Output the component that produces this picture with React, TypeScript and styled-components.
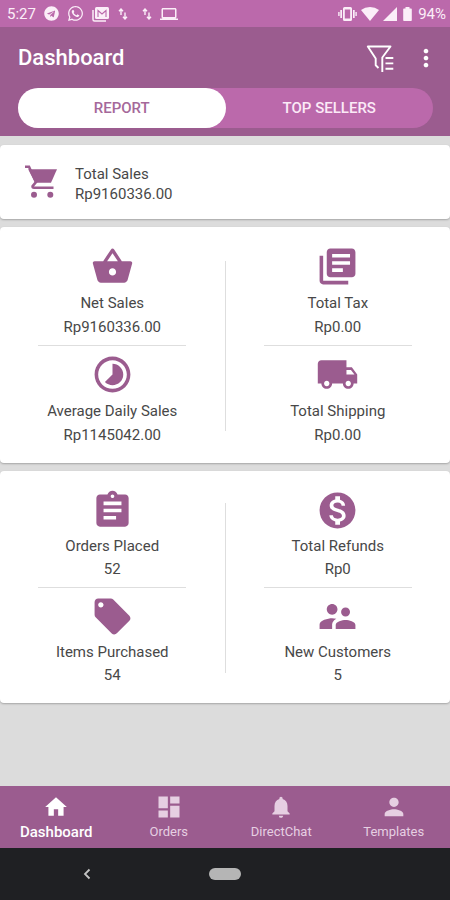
import React from "react";
import styled, { createGlobalStyle } from "styled-components";
import type { IconType } from "react-icons";
import {
  MdAssignment,
  MdDashboard,
  MdHome,
  MdLaptop,
  MdLibraryBooks,
  MdLocalOffer,
  MdLocalShipping,
  MdMonetizationOn,
  MdMoreVert,
  MdNotifications,
  MdPerson,
  MdShoppingBasket,
  MdSupervisorAccount,
  MdTimelapse,
} from "react-icons/md";
import { FaTelegram, FaWhatsapp } from "react-icons/fa";

const color = {
  primary: "#9b5c8f",
  accent: "#bb69ab",
  pale: "#e6cfe2",
  page: "#dcdcdc",
  line: "#dedede",
  text: "#484848",
};

const GlobalStyle = createGlobalStyle`
  * { box-sizing: border-box; }
  body {
    margin: 0;
    background: ${color.page};
    font-family: Roboto, "Liberation Sans", sans-serif;
    color: ${color.text};
  }
  button { font: inherit; border: 0; padding: 0; background: none; cursor: pointer; }
  svg { display: block; flex: none; }
`;

const Page = styled.div`
  min-height: 100vh;
  display: flex;
  flex-direction: column;
`;

const StatusBar = styled.div`
  display: flex;
  align-items: center;
  justify-content: space-between;
  height: 27px;
  padding: 0 4px 0 7px;
  background: ${color.accent};
  color: #fbeef8;
  font-size: 15px;
`;

const StatusGroup = styled.div<{ $gap: number }>`
  display: flex;
  align-items: center;
  gap: ${(p) => p.$gap}px;
`;

const Header = styled.header`
  background: ${color.primary};
  color: #fff;
  padding: 12px 17px 8px 18px;
`;

const TitleRow = styled.div`
  display: flex;
  align-items: center;
  height: 38px;
  margin-bottom: 11px;
`;

const Title = styled.h1`
  flex: 1;
  margin: 0;
  font-size: 22px;
  line-height: 28px;
  font-weight: 500;
`;

const IconButton = styled.button`
  display: flex;
  align-items: center;
  justify-content: center;
  color: #fff;
`;

const Actions = styled.div`
  display: flex;
  align-items: center;
  gap: 18px;
  margin-right: -7px;
`;

const Tabs = styled.div`
  display: flex;
  height: 40px;
  border-radius: 20px;
  background: ${color.accent};
`;

const Tab = styled.button<{ $active?: boolean }>`
  flex: 1;
  border-radius: 20px;
  background: ${(p) => (p.$active ? "#fff" : "transparent")};
  color: ${(p) => (p.$active ? "#a5689a" : "#fbeaf7")};
  font-size: 15px;
  font-weight: 500;
`;

const Main = styled.main`
  flex: 1;
  padding: 9px 0;
  display: flex;
  flex-direction: column;
  gap: 8px;
`;

const Card = styled.section`
  display: flex;
  align-items: center;
  background: #fff;
  border-radius: 4px;
  box-shadow: 0 1px 2px rgba(0, 0, 0, 0.25);
`;

const TotalCard = styled(Card)`
  gap: 16px;
  height: 74px;
  padding: 0 25px;
  color: ${color.primary};
`;

const TotalText = styled.div`
  display: flex;
  flex-direction: column;
  font-size: 15px;
  line-height: 20px;
  padding-top: 4px;
  color: ${color.text};
`;

const StatCard = styled(Card)<{ $line: number }>`
  padding: 18px 0 16px;
  line-height: ${(p) => p.$line}px;
`;

const Column = styled.div`
  flex: 1;
  display: flex;
  flex-direction: column;
  align-items: center;
`;

const VerticalRule = styled.div`
  width: 1px;
  height: 170px;
  background: ${color.line};
`;

const HorizontalRule = styled.hr`
  width: 66%;
  height: 1px;
  margin: 6px 0 7px;
  border: 0;
  background: ${color.line};
`;

const StatItem = styled.div`
  display: flex;
  flex-direction: column;
  align-items: center;
  font-size: 15px;
  white-space: nowrap;
`;

const IconHolder = styled.div`
  color: ${color.primary};
  margin-bottom: 3px;
`;

const BottomNav = styled.nav`
  display: grid;
  grid-template-columns: repeat(4, 1fr);
  height: 62px;
  background: ${color.primary};
`;

const NavButton = styled.button<{ $active?: boolean }>`
  display: flex;
  flex-direction: column;
  align-items: center;
  justify-content: center;
  color: ${(p) => (p.$active ? "#fff" : color.pale)};
  font-size: ${(p) => (p.$active ? 15 : 13)}px;
  font-weight: ${(p) => (p.$active ? 500 : 400)};
  line-height: 20px;
`;

const NavIcon = styled.span`
  display: flex;
  align-items: center;
  height: 30px;
`;

const SystemBar = styled.div`
  display: grid;
  grid-template-columns: repeat(3, 1fr);
  place-items: center;
  height: 52px;
  padding: 0 18px;
  background: #1f2023;
`;

const HomePill = styled.button`
  && {
    width: 32px;
    height: 12px;
    border-radius: 6px;
    background: #b5b5b5;
  }
`;

function MailStackIcon() {
  return (
    <svg width="18" height="16" viewBox="0 0 18 16" fill="none">
      <path d="M1 4v9.500q0 1.500 1.500 1.500H14" stroke="currentColor" strokeWidth="1.500" />
      <rect x="3" y="1" width="14" height="12" rx="1.500" fill="currentColor" />
      <path d="M6 11V4.500l4 3.500L14 4.500V11" stroke={color.accent} strokeWidth="1.100" />
    </svg>
  );
}

function DataArrowsIcon() {
  return (
    <svg width="10" height="12" viewBox="0 0 10 12" fill="none" stroke="currentColor" strokeWidth="1.400">
      <path d="M3 7V1M1 3.200 3 1l2 2.200M7 4.500V11M5 8.800 7 11l2-2.200" />
    </svg>
  );
}

function VibrateIcon() {
  return (
    <svg width="19" height="14" viewBox="0 0 19 14" fill="currentColor">
      <path
        fillRule="evenodd"
        d="M6.500 0h6A1.500 1.500 0 0 1 14 1.500v11a1.500 1.500 0 0 1-1.500 1.500h-6A1.500 1.500 0 0 1 5 12.500v-11A1.500 1.500 0 0 1 6.500 0zm.3 2.500v9h5.400v-9z"
      />
      <path d="M2.300 3h1.700v8H2.300zM15 3h1.700v8H15zM.2 5h1.400v4H.2zM17.400 5h1.400v4h-1.400z" />
    </svg>
  );
}

function WifiIcon() {
  return (
    <svg width="18" height="14" viewBox="0 0 18 14" fill="currentColor">
      <path d="M9 14 0 3Q4 0 9 0t9 3z" />
    </svg>
  );
}

function SignalIcon() {
  return (
    <svg width="14" height="14" viewBox="0 0 14 14" fill="currentColor">
      <path d="M14 0v14H0z" />
    </svg>
  );
}

function BatteryIcon() {
  return (
    <svg width="13" height="14" viewBox="0 0 13 14" fill="currentColor">
      <path d="M4.500 0h4v1.500H10q.8 0 .8.800v10.900q0 .8-.8.800H3q-.8 0-.8-.8V2.300q0-.8.8-.8h1.500z" />
    </svg>
  );
}

function CartIcon() {
  return (
    <svg width="34" height="34" viewBox="0 0 34 34" fill="currentColor">
      <path d="M3.200 4.200H32L26 17.800H10z" />
      <path
        d="M0 1.700H4L11 17 7.600 21.200Q7.200 22.700 9 22.700H28.500"
        fill="none"
        stroke="currentColor"
        strokeWidth="2.600"
      />
      <circle cx="9" cy="29.700" r="3" />
      <circle cx="25.300" cy="29.700" r="3" />
    </svg>
  );
}

function FilterIcon() {
  return (
    <svg width="28" height="29" viewBox="0 0 28 29" fill="none" stroke="currentColor" strokeWidth="1.900">
      <path d="M12.500 24 9.700 21.300V14.500L1.800 2.500H24.500L16.300 13.500V28" strokeLinejoin="round" />
      <path d="M19.500 14h7.800M19.500 19.400h7.800M19.500 24.800h7.800" />
    </svg>
  );
}

function BackIcon() {
  return (
    <svg width="8" height="12" viewBox="0 0 8 12" fill="none" stroke="#c4c4c4" strokeWidth="1.800">
      <path d="M6.500 1.500 2 6l4.500 4.500" />
    </svg>
  );
}

type StatData = { icon: IconType; label: string; value: string };

function Stat({ icon: Icon, label, value }: StatData) {
  return (
    <StatItem>
      <IconHolder>
        <Icon size={43} />
      </IconHolder>
      <span>{label}</span>
      <span>{value}</span>
    </StatItem>
  );
}

function StatColumn({ items }: { items: [StatData, StatData] }) {
  return (
    <Column>
      <Stat {...items[0]} />
      <HorizontalRule />
      <Stat {...items[1]} />
    </Column>
  );
}

const navItems: { icon: IconType; label: string; size: number; active?: boolean }[] = [
  { icon: MdHome, label: "Dashboard", size: 26, active: true },
  { icon: MdDashboard, label: "Orders", size: 28 },
  { icon: MdNotifications, label: "DirectChat", size: 26 },
  { icon: MdPerson, label: "Templates", size: 28 },
];

export default function App() {
  return (
    <Page>
      <GlobalStyle />
      <StatusBar>
        <StatusGroup $gap={8}>
          <span>5:27</span>
          <FaTelegram size={15} />
          <FaWhatsapp size={17} />
          <MailStackIcon />
          <StatusGroup $gap={14}>
            <DataArrowsIcon />
            <DataArrowsIcon />
          </StatusGroup>
          <MdLaptop size={18} />
        </StatusGroup>
        <StatusGroup $gap={4}>
          <VibrateIcon />
          <WifiIcon />
          <SignalIcon />
          <BatteryIcon />
          <span>94%</span>
        </StatusGroup>
      </StatusBar>

      <Header>
        <TitleRow>
          <Title>Dashboard</Title>
          <Actions>
            <IconButton aria-label="Filter">
              <FilterIcon />
            </IconButton>
            <IconButton aria-label="More options">
              <MdMoreVert size={28} />
            </IconButton>
          </Actions>
        </TitleRow>
        <Tabs role="tablist">
          <Tab role="tab" aria-selected $active>
            REPORT
          </Tab>
          <Tab role="tab" aria-selected={false}>
            TOP SELLERS
          </Tab>
        </Tabs>
      </Header>

      <Main>
        <TotalCard>
          <CartIcon />
          <TotalText>
            <span>Total Sales</span>
            <span>Rp9160336.00</span>
          </TotalText>
        </TotalCard>

        <StatCard $line={24}>
          <StatColumn
            items={[
              { icon: MdShoppingBasket, label: "Net Sales", value: "Rp9160336.00" },
              { icon: MdTimelapse, label: "Average Daily Sales", value: "Rp1145042.00" },
            ]}
          />
          <VerticalRule />
          <StatColumn
            items={[
              { icon: MdLibraryBooks, label: "Total Tax", value: "Rp0.00" },
              { icon: MdLocalShipping, label: "Total Shipping", value: "Rp0.00" },
            ]}
          />
        </StatCard>

        <StatCard $line={23}>
          <StatColumn
            items={[
              { icon: MdAssignment, label: "Orders Placed", value: "52" },
              { icon: MdLocalOffer, label: "Items Purchased", value: "54" },
            ]}
          />
          <VerticalRule />
          <StatColumn
            items={[
              { icon: MdMonetizationOn, label: "Total Refunds", value: "Rp0" },
              { icon: MdSupervisorAccount, label: "New Customers", value: "5" },
            ]}
          />
        </StatCard>
      </Main>

      <BottomNav>
        {navItems.map(({ icon: Icon, label, size, active }) => (
          <NavButton key={label} $active={active}>
            <NavIcon>
              <Icon size={size} />
            </NavIcon>
            {label}
          </NavButton>
        ))}
      </BottomNav>

      <SystemBar>
        <IconButton aria-label="Back">
          <BackIcon />
        </IconButton>
        <HomePill aria-label="Home" />
      </SystemBar>
    </Page>
  );
}
